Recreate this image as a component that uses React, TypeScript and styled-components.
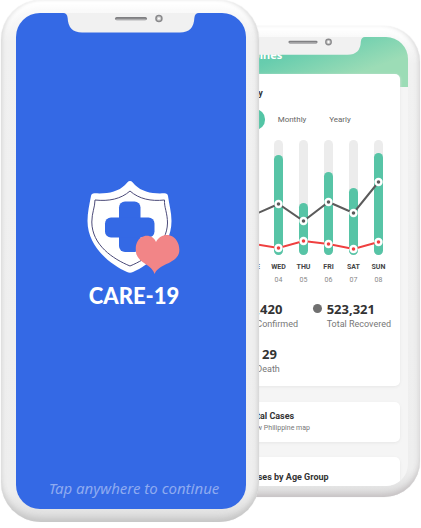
import React from 'react';
import styled, { createGlobalStyle, css } from 'styled-components';

const GlobalStyle = createGlobalStyle`
  *, *::before, *::after { box-sizing: border-box; }
  body {
    margin: 0;
    background: #fff;
    font-family: Roboto, "Noto Sans", sans-serif;
    color: #333;
  }
  button { font: inherit; border: 0; margin: 0; padding: 0; background: none; cursor: pointer; }
  h1, h2, p, dl, dd, dt, ol { margin: 0; padding: 0; }
`;

const Stage = styled.main`
  display: grid;
  grid-template-columns: 185fr 73fr 161fr;
  align-items: start;
  padding: 0 1px;
`;

const Phone = styled.section<{ $place: 'front' | 'back' }>`
  display: flex;
  grid-row: 1;
  background: linear-gradient(#fdfdfd, #f1f1f1 8%, #eeeeee 94%, #dedede);
  ${({ $place }) =>
    $place === 'front'
      ? css`
          grid-column: 1 / 3;
          aspect-ratio: 258 / 522;
          padding: 13px 13px 13px 15px;
          border-radius: 40px;
          z-index: 1;
          box-shadow: inset 0 -7px 7px -3px #c4c4c4, inset 4px 0 4px -2px #e0e0e0,
            inset -4px 0 5px -2px #d6d6d6, inset 0 6px 6px #ffffff, 0 0 1px #d4d4d4;
        `
      : css`
          grid-column: 2 / 4;
          aspect-ratio: 234 / 471;
          margin-top: 26px;
          padding: 11px 12px;
          border-radius: 36px;
          box-shadow: inset 0 -6px 6px -3px #c4bfc1, inset -4px 0 5px -2px #dadada,
            inset 0 6px 6px #ffffff, 0 0 1px #d4d4d4;
        `}
`;

const Screen = styled.div<{ $radius: number }>`
  position: relative;
  display: flex;
  flex-direction: column;
  flex: 1;
  min-width: 0;
  min-height: 0;
  overflow: hidden;
  border-radius: ${({ $radius }) => $radius}px;
  background: #f5f5f5;
`;

const NotchArt = styled.svg`
  position: absolute;
  top: 0;
  left: 50%;
  width: 59%;
  transform: translateX(-50%);
`;

const Notch = () => (
  <NotchArt viewBox="0 0 136 20" aria-hidden="true">
    <path
      d="M0 0Q4 0 4.500 5Q5 19.500 19 19.500H117Q131 19.500 131.500 5Q132 0 136 0Z"
      fill="#f1f1f1"
    />
    <rect x="52" y="4" width="32" height="3.200" rx="1.600" fill="#7f7f82" />
    <rect x="53" y="5.800" width="30" height="1.200" rx=".6" fill="#aeaeb0" />
    <circle cx="96" cy="5.500" r="3" fill="#d0d0d0" stroke="#8a8a8c" strokeWidth="1.500" />
    <circle cx="96" cy="5.500" r="1" fill="#fff" />
  </NotchArt>
);

const Splash = styled.button`
  display: flex;
  flex-direction: column;
  align-items: center;
  flex: 1;
  padding: 167px 0 11px;
  background: #3469e5;
`;

const Shield = styled.svg`
  display: block;
  width: 100px;
  height: 95px;
`;

const Brand = styled.span`
  margin-top: 7px;
  padding-left: 6px;
  font: 900 22px/28px Lato, sans-serif;
  color: #fff;
`;

const TapHint = styled.span`
  margin-top: auto;
  padding-left: 6px;
  font-family: "Noto Sans", "Open Sans", sans-serif;
  font-size: 15px;
  line-height: 20px;
  font-style: italic;
  color: #8fabf0;
  white-space: nowrap;
`;

const Header = styled.header`
  flex: none;
  height: 50px;
  padding: 9px 24px;
  background: linear-gradient(160deg, #55c7aa 10%, #68cdae 40%, #9cdcb6 75%);
  color: #fff;
`;

const HeaderTitle = styled.h1`
  font-family: "Noto Sans", "Open Sans", sans-serif;
  font-size: 11px;
  line-height: 18px;
  font-weight: 700;
`;

const Card = styled.section<{ $kind: 'overview' | 'link' | 'section' }>`
  position: relative;
  flex: none;
  border-radius: 5px;
  background: #fff;
  box-shadow: 0 1px 3px #e6e6e6;
  ${({ $kind }) =>
    $kind === 'overview'
      ? css`
          margin: -13px 8px 16px;
          padding: 12px 9px 11px 10px;
        `
      : css`
          margin: 0 8px 15px;
          padding: ${$kind === 'link' ? 7 : 13}px 8px 9px 41px;
        `}
`;

const CardTitle = styled.h2<{ $inset?: boolean }>`
  padding-left: ${({ $inset }) => ($inset ? 8 : 0)}px;
  font-size: 9px;
  line-height: 14px;
  font-weight: 700;
  color: #333;
`;

const CardNote = styled.p`
  font-size: 7px;
  line-height: 10px;
  color: #777;
`;

const Tabs = styled.div`
  display: flex;
  gap: 6px;
  margin: 9px 0 10px 11px;
`;

const Tab = styled.button<{ $active?: boolean }>`
  width: ${({ $active }) => ($active ? 38 : 42)}px;
  height: 21px;
  border-radius: 10px;
  font-size: 8px;
  line-height: 21px;
  background: ${({ $active }) => ($active ? '#53c5a5' : 'transparent')};
  color: ${({ $active }) => ($active ? '#fff' : '#666')};
`;

const ChartArt = styled.svg`
  display: block;
  width: 100%;
`;

const Days = styled.ol`
  display: grid;
  grid-template-columns: repeat(7, 1fr);
  margin-top: 5px;
  list-style: none;
  text-align: center;
`;

const Day = styled.li`
  font-size: 7px;
  line-height: 13px;
  color: #888;
`;

const DayName = styled.strong`
  display: block;
  font-weight: 700;
  color: #444;
`;

const Stats = styled.dl`
  display: grid;
  grid-template-columns: 95fr 80fr;
  row-gap: 15px;
  margin-top: 13px;
`;

const Stat = styled.div`
  position: relative;
  display: flex;
  flex-direction: column-reverse;
  align-items: flex-start;
  padding-left: 18px;
`;

const Dot = styled.i<{ $color: string }>`
  position: absolute;
  left: 4px;
  top: 4px;
  width: 9px;
  height: 9px;
  border-radius: 50%;
  background: ${({ $color }) => $color};
`;

const StatLabel = styled.dt`
  font-size: 9px;
  line-height: 12px;
  color: #777;
  white-space: nowrap;
`;

const StatValue = styled.dd<{ $indent?: boolean }>`
  padding-left: ${({ $indent }) => ($indent ? 28 : 0)}px;
  font-family: "Noto Sans", "Open Sans", sans-serif;
  font-size: 13px;
  line-height: 18px;
  font-weight: 700;
  color: #333;
`;

type DayData = { name: string; date: string; top: number; recovered: number; deaths: number };

const week: DayData[] = [
  { name: 'MON', date: '02', top: 40, recovered: 62, deaths: 108 },
  { name: 'TUE', date: '03', top: 30, recovered: 75, deaths: 104 },
  { name: 'WED', date: '04', top: 15, recovered: 64, deaths: 108 },
  { name: 'THU', date: '05', top: 63, recovered: 81, deaths: 101 },
  { name: 'FRI', date: '06', top: 32, recovered: 62, deaths: 104 },
  { name: 'SAT', date: '07', top: 48, recovered: 73, deaths: 109 },
  { name: 'SUN', date: '08', top: 13, recovered: 42, deaths: 102 },
];

const centre = (i: number) => 12.5 + i * 25;

const Series = ({ field, color }: { field: 'recovered' | 'deaths'; color: string }) => (
  <g>
    <polyline
      points={week.map((d, i) => `${centre(i)},${d[field]}`).join(' ')}
      fill="none"
      stroke={color}
      strokeWidth="2"
    />
    {week.map((d, i) => (
      <circle
        key={d.name}
        cx={centre(i)}
        cy={d[field]}
        r="3"
        fill={color}
        stroke="#fff"
        strokeWidth="2.400"
      />
    ))}
  </g>
);

const Chart = () => (
  <ChartArt viewBox="0 0 175 116" role="img" aria-label="Cases for each day of the week">
    {week.map((d, i) => (
      <g key={d.name}>
        <rect x={centre(i) - 4.5} y="0" width="9" height="115" rx="4.500" fill="#ececec" />
        <rect
          x={centre(i) - 4.5}
          y={d.top}
          width="9"
          height={115 - d.top}
          rx="4.500"
          fill="#57c4a6"
        />
      </g>
    ))}
    <Series field="recovered" color="#5b5b5b" />
    <Series field="deaths" color="#ef4040" />
  </ChartArt>
);

const stats = [
  { value: '241,420', label: 'Total Confirmed', color: '#57c4a6' },
  { value: '523,321', label: 'Total Recovered', color: '#707070' },
  { value: '29', label: 'Total Death', color: '#ef4040', indent: true },
];

export default function App() {
  return (
    <>
      <GlobalStyle />
      <Stage>
        <Phone $place="back" aria-label="Statistics">
          <Screen $radius={22}>
            <Header>
              <HeaderTitle>Philippines</HeaderTitle>
            </Header>
            <Card $kind="overview">
              <CardTitle $inset>Summary</CardTitle>
              <Tabs>
                <Tab $active>Daily</Tab>
                <Tab>Monthly</Tab>
                <Tab>Yearly</Tab>
              </Tabs>
              <Chart />
              <Days>
                {week.map((d) => (
                  <Day key={d.name}>
                    <DayName>{d.name}</DayName>
                    {d.date}
                  </Day>
                ))}
              </Days>
              <Stats>
                {stats.map((s) => (
                  <Stat key={s.label}>
                    <StatLabel>{s.label}</StatLabel>
                    <StatValue $indent={s.indent}>{s.value}</StatValue>
                    <Dot $color={s.color} />
                  </Stat>
                ))}
              </Stats>
            </Card>
            <Card $kind="link">
              <CardTitle>Total Cases</CardTitle>
              <CardNote>View Philippine map</CardNote>
            </Card>
            <Card $kind="section">
              <CardTitle>Cases by Age Group</CardTitle>
            </Card>
            <Notch />
          </Screen>
        </Phone>

        <Phone $place="front" aria-label="Welcome">
          <Screen $radius={24}>
            <Splash>
              <Shield viewBox="-6 0 100 95" aria-hidden="true">
                <path
                  d="M43 1C45 1 46 3 48 5C55 12 66 14 77 13.300Q80.500 13 81 16C82 24 84.500 32 84.500 41C84.500 67 62 85 46 92Q43 93.500 40 92C24 85 .5 67 .5 41C.5 32 2.500 24 4 16Q4.500 13 8 13.300C20 14 31 12 38 5C40 3 41 1 43 1Z"
                  fill="#fff"
                />
                <path
                  d="M43 11C52 19 64 21.500 77.500 20C77 27 80.500 33 80.500 43C80 65 60 79 43 86C26 79 5 65 4.800 42C4.800 33 8 27 8 20C22 21.500 34 19 43 11Z"
                  fill="none"
                  stroke="#4b4a78"
                  strokeWidth="1"
                />
                <rect x="32" y="21.500" width="21.500" height="50.500" rx="6" fill="#3469e5" />
                <rect x="18" y="37.500" width="49.500" height="20" rx="6" fill="#3469e5" />
                <path
                  d="M69 62C72 56 78 54 83 55.500C90 57.500 93.500 66 92 73C89 84 71 84 67.700 94C65 85 52 83 49.300 74C47.500 66 50 58 57 56.200C62 55 67 57 69 62Z"
                  fill="#f28587"
                />
              </Shield>
              <Brand>CARE-19</Brand>
              <TapHint>Tap anywhere to continue</TapHint>
            </Splash>
            <Notch />
          </Screen>
        </Phone>
      </Stage>
    </>
  );
}
